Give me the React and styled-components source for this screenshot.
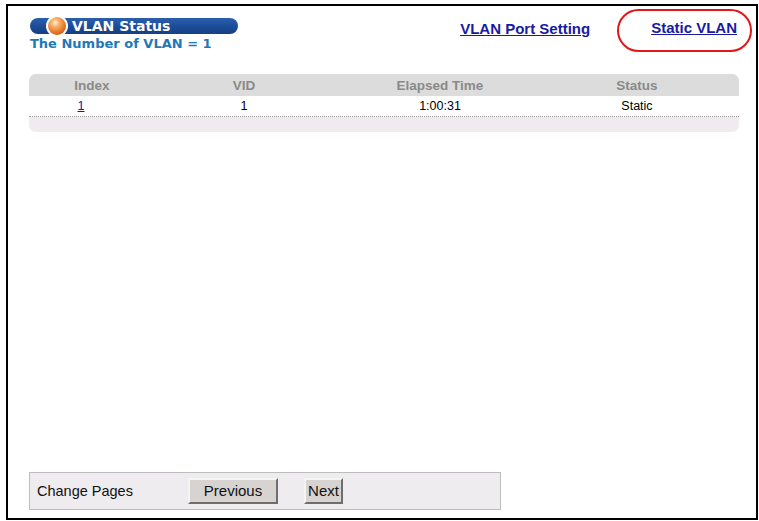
import React from 'react'
import styled, { createGlobalStyle } from 'styled-components'

const GlobalStyle = createGlobalStyle`
  body {
    margin: 0;
    background: #ffffff;
    font-family: 'Liberation Sans', Arial, sans-serif;
  }
`

const columns = ['Index', 'VID', 'Elapsed Time', 'Status']
const rows = [{ index: '1', vid: '1', elapsed: '1:00:31', status: 'Static' }]

function Ball() {
    return (
        <svg width="24" height="22" viewBox="0 0 24 22">
            <defs>
                <radialGradient id="ballGrad" cx="40%" cy="32%" r="70%">
                    <stop offset="0%" stopColor="#fff4dc" />
                    <stop offset="30%" stopColor="#f7b46a" />
                    <stop offset="75%" stopColor="#e8782a" />
                    <stop offset="100%" stopColor="#c85a14" />
                </radialGradient>
            </defs>
            <circle cx="12" cy="11" r="11" fill="#ffffff" />
            <circle cx="12" cy="11" r="9" fill="url(#ballGrad)" />
        </svg>
    )
}

function App() {
    return (
        <>
            <GlobalStyle />
            <Frame>
                <Header>
                    <TitleBlock>
                        <Pill>
                            <BallSlot><Ball /></BallSlot>
                            <PillText>VLAN Status</PillText>
                        </Pill>
                        <Count>The Number of VLAN = 1</Count>
                    </TitleBlock>
                    <Links>
                        <NavLink href="#">VLAN Port Setting</NavLink>
                        <Highlight>
                            <NavLink href="#">Static VLAN</NavLink>
                        </Highlight>
                    </Links>
                </Header>

                <Table>
                    <HeadRow>
                        {columns.map(c => <HeadCell key={c}>{c}</HeadCell>)}
                    </HeadRow>
                    {rows.map(r => (
                        <DataRow key={r.index}>
                            <DataCell $shift={22}><IndexLink href="#">{r.index}</IndexLink></DataCell>
                            <DataCell>{r.vid}</DataCell>
                            <DataCell>{r.elapsed}</DataCell>
                            <DataCell>{r.status}</DataCell>
                        </DataRow>
                    ))}
                    <TableFoot />
                </Table>

                <Pager>
                    <PagerLabel>Change Pages</PagerLabel>
                    <PageButton $w={90}>Previous</PageButton>
                    <PageButton $w={39}>Next</PageButton>
                </Pager>
            </Frame>
        </>
    )
}

export default App


const Frame = styled.div`
    margin: 4px 0 0 6px;
    width: 748px;
    height: 512px;
    border: 2px solid #000;
    display: flex;
    flex-direction: column;
`

const Header = styled.div`
    display: flex;
    justify-content: space-between;
    align-items: flex-start;
    padding: 12px 4px 0 22px;
`

const TitleBlock = styled.div`
    display: flex;
    flex-direction: column;
    gap: 2px;
`

const Pill = styled.div`
    width: 208px;
    height: 16px;
    border-radius: 8px;
    background: linear-gradient(#2a5fae, #1b4a96 60%, #163f84);
    display: flex;
    align-items: center;
    padding-left: 15px;
    box-sizing: border-box;
`

const BallSlot = styled.div`
    display: flex;
    margin: 0 3px 0 0;
    height: 16px;
    align-items: center;
`

const PillText = styled.span`
    color: #ffffff;
    font-family: 'DejaVu Sans', Verdana, sans-serif;
    font-weight: bold;
    font-size: 14px;
    line-height: 16px;
`

const Count = styled.div`
    color: #1d78b8;
    font-family: 'DejaVu Sans', Verdana, sans-serif;
    font-weight: bold;
    font-size: 13px;
    line-height: 16px;
`

const Links = styled.div`
    display: flex;
    align-items: flex-start;
    gap: 27px;
    padding-top: 2px;
`

const NavLink = styled.a`
    display: block;
    color: #1a1aa0;
    font-family: 'Liberation Sans', Arial, sans-serif;
    font-weight: bold;
    font-size: 15px;
    line-height: 17px;
    text-decoration: underline;
`

const Highlight = styled.div`
    border: 2px solid #e01818;
    border-radius: 24px;
    padding: 8px 13px 14px 32px;
    margin-top: -11px;
`

const Table = styled.div`
    margin: 22px 0 0 21px;
    width: 710px;
    border-radius: 7px;
    overflow: hidden;
    background: #efebef;
    font-family: 'Liberation Sans', Arial, sans-serif;
`

const HeadRow = styled.div`
    display: grid;
    grid-template-columns: 126px 178px 214px 180px;
    height: 22px;
    align-items: center;
    background: #dcdcdc;
`

const HeadCell = styled.div`
    text-align: center;
    color: #8a8a8a;
    font-weight: bold;
    font-size: 13.5px;
`

const DataRow = styled.div`
    display: grid;
    grid-template-columns: 126px 178px 214px 180px;
    height: 20px;
    align-items: center;
    background: #ffffff;
    border-bottom: 1px dotted #9a9a9a;
`

const DataCell = styled.div`
    text-align: center;
    font-size: 12.5px;
    color: #000;
    padding-right: ${p => p.$shift || 0}px;
`

const IndexLink = styled.a`
    color: #1a1a9c;
    text-decoration: underline;
`

const TableFoot = styled.div`
    height: 15px;
`

const Pager = styled.div`
    margin: auto 0 8px 21px;
    width: 472px;
    height: 38px;
    box-sizing: border-box;
    background: #eeecee;
    border: 1px solid #bdbdbd;
    display: flex;
    align-items: center;
    gap: 26px;
    padding-left: 7px;
`

const PagerLabel = styled.span`
    width: 126px;
    margin-right: -1px;
    font-size: 14.5px;
    color: #111;
`

const PageButton = styled.button`
    width: ${p => p.$w}px;
    height: 26px;
    padding: 0;
    margin-top: -1px;
    background: #d6d3d0;
    border: 2px solid;
    border-color: #f4f4f4 #6e6e6e #6e6e6e #f4f4f4;
    font-family: 'Liberation Sans', Arial, sans-serif;
    font-size: 15px;
    color: #111;
`
